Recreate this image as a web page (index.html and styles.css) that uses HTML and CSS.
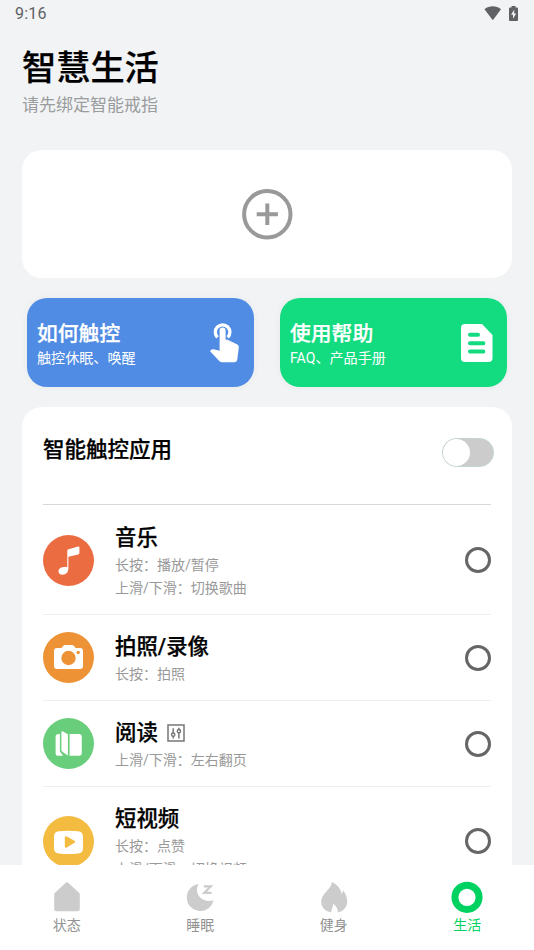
FILE: index.html
```html
<!DOCTYPE html>
<html lang="zh-CN">
<head>
<meta charset="utf-8">
<title>智慧生活</title>
<link rel="stylesheet" href="styles.css">
</head>
<body>
<div class="screen">
  <div class="status">
    <span class="time">9:16</span>
    <svg class="wifi" width="18" height="15" viewBox="0 0 18 15"><path d="M.5 3.2C5.500-.6 12-.6 17 3.200L9.400 13.600q-.6.6-1.200 0z"/></svg>
    <svg class="battery" width="9" height="15" viewBox="0 0 9 15"><path d="M2.500 0h4v1.600H8q1 0 1 1V14q0 1-1 1H1q-1 0-1-1V2.600q0-1 1-1h1.500z"/><path class="bolt" d="M5.300 3.600 2 8.700h2v4L7.200 7.500H5.100z"/></svg>
  </div>
  <main class="content">
    <header class="heading">
      <h1>智慧生活</h1>
      <p>请先绑定智能戒指</p>
    </header>
    <section class="add-card">
      <svg width="52" height="52" viewBox="0 0 52 52"><circle cx="26.300" cy="26.200" r="23.200"/><path d="M26.300 15.400v21.600M15.700 26.200h21.200"/></svg>
    </section>
    <section class="tiles">
      <div class="tile blue">
        <div class="label"><h2>如何触控</h2><p>触控休眠、唤醒</p></div>
        <svg class="touch" width="30" height="42" viewBox="0 0 30 42"><path class="ring" d="M7.500 15.400A7.300 7.300 0 1 1 17.700 15.400"/><path d="M9.600 8.500q0-3.100 3-3.100t3 3.100v9.300h2.100l9.600 4.700q1.800 1 1.500 3l-1.500 11.700q-.4 3-3 3H12.200q-1.600 0-2.900-1.300L0 29.200l1.200-1.400q.8-.8 2.200-.5l6.200 1.400z"/></svg>
      </div>
      <div class="tile green">
        <div class="label"><h2>使用帮助</h2><p>FAQ、产品手册</p></div>
        <svg width="32" height="40" viewBox="0 0 32 40"><path d="M4 1h17l10.500 11V35q0 4-4 4H4q-4 0-4-4V5q0-4 4-4z"/><path class="lines" d="M9 11.800h8M9 20.200h13.400M9 28.500h13.400"/></svg>
      </div>
    </section>
    <section class="apps">
      <div class="apps-head">
        <h2>智能触控应用</h2>
        <div class="switch"><i></i></div>
      </div>
      <ul>
        <li>
          <svg class="icon music" viewBox="0 0 51 51"><circle class="bg" cx="25.500" cy="25.500" r="25.500"/><path d="M24.300 15.800q0-1.300 1.300-1.600l9.400-2.700q1.400-.3 1.400 1v5.600q0 1-1.200 1.300l-9.800 2.400v11.500c0 4.300-2.500 6.400-5.800 6.400-2.800 0-4.100-1.400-4.100-3.500 0-3.200 3.600-4.600 8.800-4.100z"/></svg>
          <div class="info"><h3>音乐</h3><p>长按：播放/暂停</p><p>上滑/下滑：切换歌曲</p></div>
          <i class="radio"></i>
        </li>
        <li>
          <svg class="icon camera" viewBox="0 0 51 51"><circle class="bg" cx="25.500" cy="25.500" r="25.500"/><path d="M14 16h4.500l1.600-2q.8-1 2-1H29q1.200 0 2 1l1.600 2H37q3 0 3 3v15q0 3-3 3H14q-3 0-3-3V19q0-3 3-3z"/><circle class="bg" cx="25.500" cy="26" r="7.200"/><circle class="bg" cx="35.200" cy="20.500" r="1.700"/></svg>
          <div class="info"><h3>拍照/录像</h3><p>长按：拍照</p></div>
          <i class="radio"></i>
        </li>
        <li>
          <svg class="icon book" viewBox="0 0 51 51"><circle class="bg" cx="25.500" cy="25.500" r="25.500"/><path d="M12.600 18.600q0-2.700 3-2.700h1.300v17.500l3.200 4.400h-5q-2.500 0-2.500-2.500zM18.400 14.500q0-1.900 1.700-.9l4.800 2.700v21.200l-5.300-3.600q-1.200-.8-1.200-2zM26.600 15.900H36q2.800 0 2.800 2.800v16.300q0 2.800-2.800 2.800h-9.400z"/></svg>
          <div class="info"><h3>阅读<svg class="tune" width="18" height="18" viewBox="0 0 18 18"><path d="M1 1h16v16H1zM6.200 4.200v5M6.200 12.300v2.200M11.900 3.800v2M11.900 8.800v5.700"/><circle cx="6.200" cy="10.700" r="1.600"/><circle cx="11.900" cy="7.200" r="1.600"/></svg></h3><p>上滑/下滑：左右翻页</p></div>
          <i class="radio"></i>
        </li>
        <li>
          <svg class="icon video" viewBox="0 0 51 51"><circle class="bg" cx="25.500" cy="25.500" r="25.500"/><path d="M11 20.500q0-4.900 4.900-5.300 9.600-1.100 19.200 0 4.900.4 4.900 5.300v12q0 4.400-4.900 4.900-9.600 1-19.200 0-4.900-.5-4.900-4.900z"/><path class="bg" d="M21.800 21.700q0-2.300 2-1.200l7.700 4.200q1.600 1 0 2l-7.700 4.700q-2 1.100-2-1.200z"/></svg>
          <div class="info"><h3>短视频</h3><p>长按：点赞</p><p>上滑/下滑：切换视频</p></div>
          <i class="radio"></i>
        </li>
      </ul>
    </section>
  </main>
  <nav>
    <a><svg width="34" height="34" viewBox="0 0 34 34"><path d="M4.200 14.500q0-1 .8-1.800L15.500 3q1.500-1.300 3 0L29 12.700q.8.800.8 1.800V29q0 2.300-2.300 2.300h-21Q4.200 31.300 4.200 29z"/></svg><span>状态</span></a>
    <a><svg width="34" height="34" viewBox="0 0 34 34"><path d="M15.700 4.100C10.500 12 17.500 23.800 30.500 20.300a13.500 13.500 0 1 1-14.800-16.200z"/><path class="zed" d="M20.800 6.300h7l-6.500 6.500h7.300"/></svg><span>睡眠</span></a>
    <a><svg width="34" height="34" viewBox="0 0 34 34"><path d="M14.900 1.900C20 4 24.500 9.500 24.700 14.300q1.600-2.200 1-4.500C29 13.500 30.300 18 30.200 22c-.2 5.300-4 9.600-9.400 10.300.2-3-1.200-6.400-5-8.800 1 3-1.200 5-1.600 8.800C8 31.500 4.200 27 4.200 21.500 4.200 13.500 14.500 9 14.900 1.900z"/></svg><span>健身</span></a>
    <a class="active"><svg width="34" height="34" viewBox="0 0 34 34"><circle cx="17" cy="17.300" r="12.100"/></svg><span>生活</span></a>
  </nav>
</div>
</body>
</html>
```
FILE: styles.css
```css
* { box-sizing: border-box; margin: 0; padding: 0; }
body { font-family: Roboto, "Noto Sans CJK SC", sans-serif; background: #f1f3f5; color: #000; }
svg { display: block; flex: none; }
h1, h2, h3 { font-weight: 500; white-space: nowrap; -webkit-text-stroke: .25px currentColor; }
.screen { width: 534px; height: 950px; display: flex; flex-direction: column; overflow: hidden; }

.status { height: 28px; flex: none; display: flex; align-items: center; padding: 0 16px 2px 15px; color: #5f6164; fill: #5f6164; }
.time { flex: 1; font-size: 16px; letter-spacing: .2px; line-height: 26px; padding-top: 2px; }
.battery { margin-left: 7px; }
.bolt { fill: #f1f3f5; }

.content { flex: 1; min-height: 0; overflow: hidden; padding: 0 22px; }
.heading { height: 122px; padding-top: 15px; }
.heading h1 { font-size: 34.200px; line-height: 50px; }
.heading p { font-size: 17px; line-height: 25px; color: #9b9c9d; }

.add-card { height: 128px; background: #fff; border-radius: 20px; display: flex; align-items: center; justify-content: center; }
.add-card svg { fill: none; stroke: #999; stroke-width: 4; }

.tiles { display: flex; gap: 26px; padding: 20px 5px; }
.tile { flex: 1; height: 89px; border-radius: 20px; color: #fff; fill: #fff; display: flex; align-items: center; justify-content: space-between; padding: 0 14px 0 10px; box-shadow: 0 0 9px rgba(0, 0, 0, .045); }
.label { padding-top: 4px; }
.tile h2 { font-size: 20.800px; line-height: 27px; }
.tile p { font-size: 14.100px; line-height: 21px; }
.blue { background: #508ce3; }
.green { background: #13db80; }
.ring { fill: none; stroke: #fff; stroke-width: 3.300; }
.lines { fill: none; stroke: #13db80; stroke-width: 4; stroke-linecap: round; }

.apps { background: #fff; border-radius: 20px; padding: 0 21px; }
.apps-head { height: 97px; display: flex; justify-content: space-between; padding-top: 27px; margin-right: -3px; }
.apps-head h2 { font-size: 21.500px; line-height: 32px; }
.switch { width: 52px; height: 29px; margin-top: 4px; border-radius: 15px; background: #ccc; border: 1px solid #c1d5cf; }
.switch i { display: block; width: 27px; height: 27px; border-radius: 50%; background: #fff; }
.apps ul { list-style: none; }
.apps li { display: flex; align-items: center; padding: 14px 0; border-top: 1px solid #efeff0; }
.apps li:first-child { border-top-color: #d8d8d8; padding-top: 15px; }
.icon { width: 51px; height: 51px; fill: #fff; margin-right: 21px; }
.info { flex: 1; padding-top: 2px; }
.info h3 { display: flex; align-items: center; font-size: 21.400px; line-height: 32px; height: 32px; }
.info p { font-size: 14px; line-height: 23px; color: #999; }
.radio { width: 26px; height: 26px; border: 3px solid #666; border-radius: 50%; }
.tune { margin-left: 9px; fill: none; stroke: #777; stroke-width: 1.500; }
.music .bg { fill: #ec6c42; }
.camera .bg { fill: #ee9236; }
.book .bg { fill: #69ce7b; }
.video .bg { fill: #f3bc41; }

nav { height: 85px; flex: none; display: flex; background: #fff; padding-top: 15px; }
nav a { flex: 1; display: flex; flex-direction: column; align-items: center; font-size: 14px; line-height: 21px; color: #929292; fill: #ccc; }
nav span { padding-top: 1px; }
nav .zed { fill: none; stroke: #ccc; stroke-width: 2.200; }
nav .active { color: #00d261; fill: none; stroke: none; }
nav .active circle { stroke: #00d261; stroke-width: 7; }
```
